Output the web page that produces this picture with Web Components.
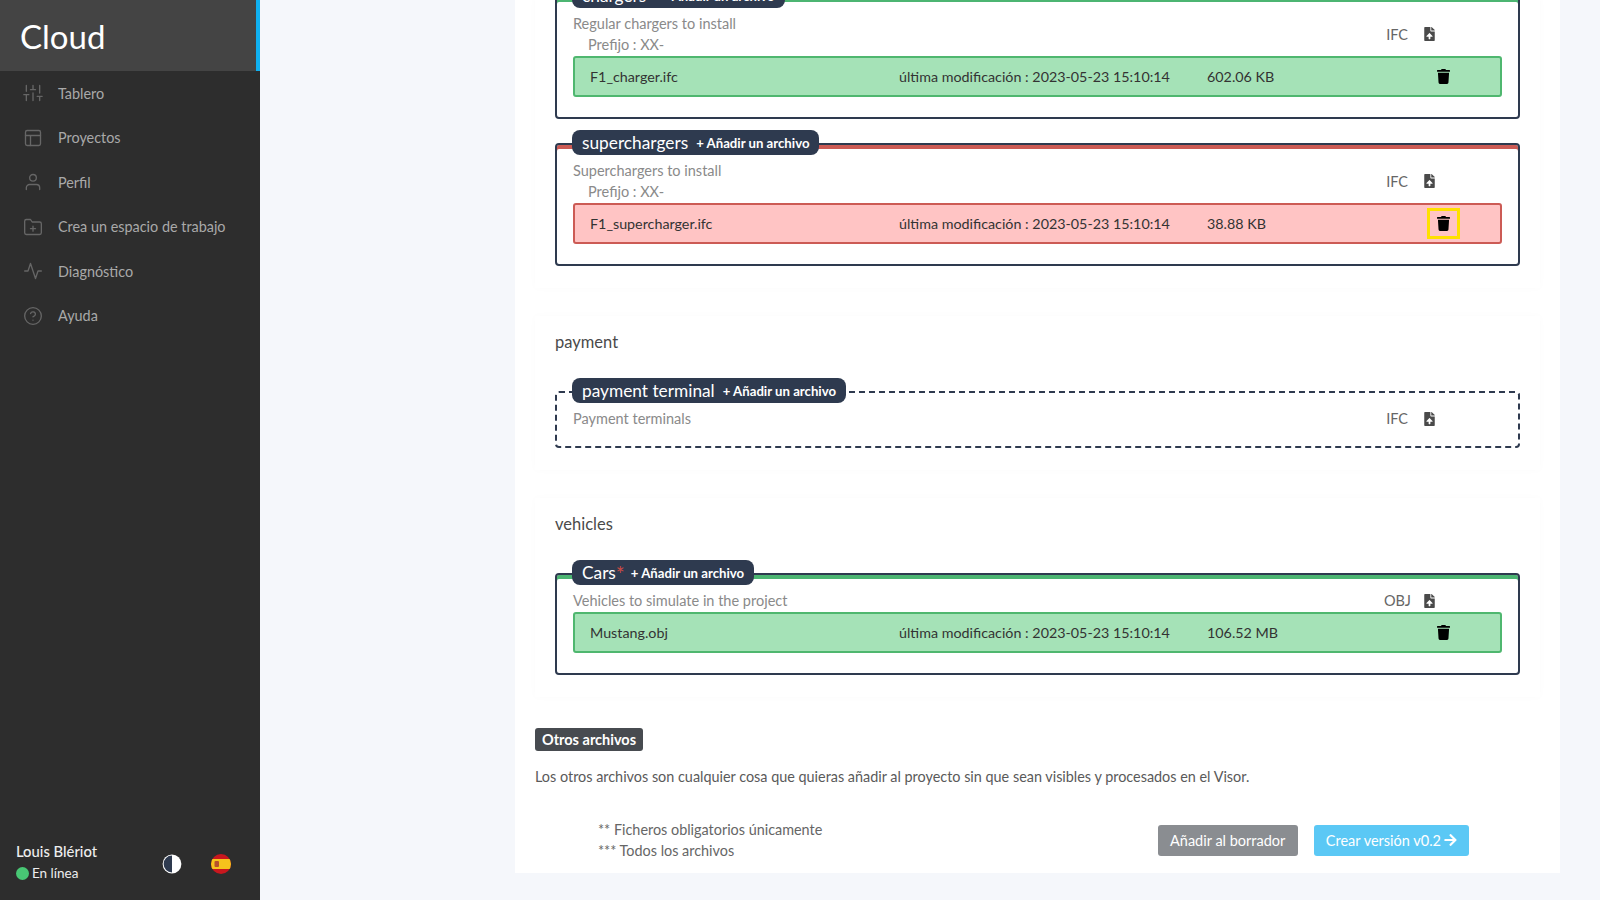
<!DOCTYPE html>
<html lang="es">
<head>
<meta charset="utf-8">
<title>Cloud</title>
<style>
  html, body { margin: 0; height: 100%; }
  body { background: #f5f7fb; font-family: Lato, "Noto Sans", sans-serif; font-size: 15px; overflow: hidden; }
</style>
</head>
<body>
<cloud-app>
  <cloud-sidebar slot="side">
    <nav-item icon="sliders">Tablero</nav-item>
    <nav-item icon="layout">Proyectos</nav-item>
    <nav-item icon="user">Perfil</nav-item>
    <nav-item icon="folder">Crea un espacio de trabajo</nav-item>
    <nav-item icon="activity">Diagnóstico</nav-item>
    <nav-item icon="help">Ayuda</nav-item>
  </cloud-sidebar>

  <version-card>
    <upload-section>
      <upload-box name="chargers" required status="ok" desc="Regular chargers to install" prefix="XX-" format="IFC">
        <file-row name="F1_charger.ifc" date="2023-05-23 15:10:14" size="602.06 KB" status="ok"></file-row>
      </upload-box>
      <upload-box name="superchargers" status="bad" desc="Superchargers to install" prefix="XX-" format="IFC">
        <file-row name="F1_supercharger.ifc" date="2023-05-23 15:10:14" size="38.88 KB" status="bad" focused></file-row>
      </upload-box>
    </upload-section>

    <upload-section heading="payment">
      <upload-box name="payment terminal" status="empty" desc="Payment terminals" format="IFC"></upload-box>
    </upload-section>

    <upload-section heading="vehicles">
      <upload-box name="Cars" required status="ok" desc="Vehicles to simulate in the project" format="OBJ">
        <file-row name="Mustang.obj" date="2023-05-23 15:10:14" size="106.52 MB" status="ok"></file-row>
      </upload-box>
    </upload-section>

    <other-files></other-files>
    <version-actions></version-actions>
  </version-card>
</cloud-app>

<script>
(function () {

  const ICONS = {
    sliders: '<path d="M4 21v-7M4 10V3M12 21v-9M12 8V3M20 21v-5M20 12V3M1 14h6M9 8h6M17 16h6"/>',
    layout: '<rect x="3" y="3" width="18" height="18" rx="2"/><path d="M3 9h18M9 21V9"/>',
    user: '<path d="M20 21v-2a4 4 0 0 0-4-4H8a4 4 0 0 0-4 4v2"/><circle cx="12" cy="7" r="4"/>',
    folder: '<path d="M22 19a2 2 0 0 1-2 2H4a2 2 0 0 1-2-2V5a2 2 0 0 1 2-2h5l2 3h9a2 2 0 0 1 2 2z"/><path d="M12 11v6M9 14h6"/>',
    activity: '<path d="M22 12h-4l-3 9L9 3l-3 9H2"/>',
    help: '<circle cx="12" cy="12" r="10"/><path d="M9.09 9a3 3 0 0 1 5.83 1c0 2-3 3-3 3M12 17h.01"/>'
  };

  const FILE_UPLOAD = '<svg viewBox="0 0 384 512" width="11" height="14" fill="#4a4a4a"><path d="M224 136V0H24C10.7 0 0 10.7 0 24v464c0 13.3 10.7 24 24 24h336c13.3 0 24-10.7 24-24V160H248c-13.2 0-24-10.8-24-24zm65.18 216.01H224v80c0 8.84-7.16 16-16 16h-32c-8.84 0-16-7.16-16-16v-80H94.82c-14.28 0-21.41-17.29-11.27-27.36l96.42-95.7c6.65-6.61 17.39-6.61 24.04 0l96.42 95.7c10.15 10.07 3.03 27.36-11.25 27.36zM377 105L279.1 7c-4.5-4.5-10.6-7-17-7H256v128h128v-6.1c0-6.3-2.5-12.4-7-16.9z"/></svg>';
  const TRASH = '<svg viewBox="0 0 448 512" width="13" height="15" fill="#000"><path d="M432 32H312l-9.4-18.7A24 24 0 0 0 281.1 0H166.8a23.72 23.72 0 0 0-21.4 13.3L136 32H16A16 16 0 0 0 0 48v32a16 16 0 0 0 16 16h416a16 16 0 0 0 16-16V48a16 16 0 0 0-16-16zM53.2 467a48 48 0 0 0 47.9 45h245.8a48 48 0 0 0 47.9-45L416 128H32z"/></svg>';
  const ARROW = '<svg viewBox="0 0 448 512" width="13" height="14" fill="#fff"><path d="M190.5 66.9l22.2-22.2c9.4-9.4 24.6-9.4 33.9 0L441 239c9.4 9.4 9.4 24.6 0 33.9L246.6 467.3c-9.4 9.4-24.6 9.4-33.9 0l-22.2-22.2c-9.5-9.5-9.3-25 .4-34.3L311.4 296H24c-13.3 0-24-10.7-24-24v-32c0-13.3 10.7-24 24-24h287.4L190.9 101.2c-9.8-9.3-10-24.8-.4-34.3z"/></svg>';

  /** Page frame: sidebar on the left, page content pinned to the bottom of the window */
  class CloudApp extends HTMLElement {
    constructor() {
      super();
      this.attachShadow({ mode: 'open' }).innerHTML = `
        <style>
          :host { display: flex; height: 100vh; }
          main { flex: 1; min-width: 0; height: 100%; overflow: hidden; display: flex; flex-direction: column; justify-content: flex-end; padding: 0 40px 27px 255px; box-sizing: border-box; }
        </style>
        <slot name="side"></slot>
        <main><slot></slot></main>`;
    }
  }

  class CloudSidebar extends HTMLElement {
    constructor() {
      super();
      this.attachShadow({ mode: 'open' }).innerHTML = `
        <style>
          :host { display: flex; flex-direction: column; flex: none; width: 260px; height: 100%; background: #2d2d2d; }
          header { height: 71px; flex: none; display: flex; align-items: center; padding: 2px 0 0 20px; box-sizing: border-box; background: #444; border-right: 4px solid #0fb0f0; color: #fff; font-size: 33px; line-height: 1; }
          nav { display: flex; flex-direction: column; }
          footer { margin-top: auto; display: grid; grid-template-columns: 146px 20px 49px; padding: 0 0 16px 16px; align-items: center; }
          .who { display: flex; flex-direction: column; color: #eee; line-height: 22px; }
          .name { font-size: 14.8px; font-weight: 500; }
          .state { display: flex; align-items: center; gap: 3px; font-size: 13.5px; }
          .dot { width: 13px; height: 13px; border-radius: 50%; background: #48c774; }
          .theme { margin-top: 4px; }
          .flag { margin: 4px 0 0 29px; }
          svg { display: block; }
        </style>
        <header>Cloud</header>
        <nav><slot></slot></nav>
        <footer>
          <div class="who"><span class="name">Louis Blériot</span><span class="state"><span class="dot"></span>En línea</span></div>
          <svg class="theme" width="20" height="20" viewBox="0 0 20 20"><circle cx="10" cy="10" r="9.4" fill="#fff"/><path d="M10 1.6a8.4 8.4 0 0 0 0 16.8z" fill="#2e3a4f"/></svg>
          <svg class="flag" width="20" height="20" viewBox="0 0 20 20"><clipPath id="c"><circle cx="10" cy="10" r="10"/></clipPath><g clip-path="url(#c)"><rect width="20" height="20" fill="#c8171e"/><rect y="5" width="20" height="10" fill="#f6c21c"/><rect x="3.5" y="7" width="4.5" height="6" rx="1" fill="#b5502c"/></g></svg>
        </footer>`;
    }
  }

  class NavItem extends HTMLElement {
    constructor() {
      super();
      this.attachShadow({ mode: 'open' }).innerHTML = `
        <style>
          :host { display: flex; align-items: center; height: 44.5px; padding-left: 23px; color: #a9a9a9; font-size: 14.4px; }
          svg { width: 20px; height: 20px; margin-right: 15px; fill: none; stroke: #666; stroke-width: 1.6; stroke-linecap: round; stroke-linejoin: round; flex: none; }
        </style>
        <svg viewBox="0 0 24 24">${ICONS[this.getAttribute('icon')] || ''}</svg><slot></slot>`;
    }
  }

  /** Main white card */
  class VersionCard extends HTMLElement {
    constructor() {
      super();
      this.attachShadow({ mode: 'open' }).innerHTML = `
        <style>
          :host { display: flex; flex-direction: column; flex: none; background: #fff; padding: 0 20px 12px; }
        </style>
        <slot></slot>`;
    }
  }

  /** One family of files, with an optional heading */
  class UploadSection extends HTMLElement {
    constructor() {
      super();
      const heading = this.getAttribute('heading');
      this.attachShadow({ mode: 'open' }).innerHTML = `
        <style>
          :host { display: flex; flex-direction: column; gap: 24px; padding: 0 20px 22px; margin-bottom: 28px; background: #fff; box-shadow: 0 0 8px rgba(0,0,0,.018); }
          h3 { margin: 15px 0 14px; font-size: 16.5px; font-weight: 400; line-height: 22px; color: #4a4a4a; }
        </style>
        ${heading ? `<h3>${heading}</h3>` : ''}
        <slot></slot>`;
    }
  }

  class UploadBox extends HTMLElement {
    constructor() {
      super();
      const prefix = this.getAttribute('prefix');
      this.attachShadow({ mode: 'open' }).innerHTML = `
        <style>
          :host { display: block; border: 2px solid #2e3a4f; border-radius: 4px; padding: 0 16px 16px; }
          :host([status="ok"]) { box-shadow: inset 0 4px 0 #4cb572; }
          :host([status="bad"]) { box-shadow: inset 0 4px 0 #cc5b55; }
          :host([status="empty"]) { border-style: dashed; }
          .pill { display: flex; width: fit-content; align-items: center; height: 25px; margin: -15px 0 0 -1px; padding: 0 10px; background: #2e3a4f; border-radius: 8px; color: #fff; position: relative; }
          .name { font-size: 17.3px; }
          .star { color: #cc4b45; font-size: 21px; line-height: 0; vertical-align: -3px; margin-right: -2px; }
          .add { font-size: 13.2px; font-weight: 700; margin-left: 8px; }
          .head { display: flex; align-items: center; margin-top: 5px; color: #8a8a8a; font-size: 14.5px; line-height: 21px; }
          .prefix { margin-left: 15px; }
          .format { margin-left: auto; width: 24px; text-align: right; color: #666; }
          .up { display: flex; margin: 0 67px 0 16px; }
          slot { display: block; margin-top: 1px; }
          ::slotted(file-row) { margin-bottom: 4px; }
        </style>
        <div class="pill"><span class="name">${this.getAttribute('name')}${this.hasAttribute('required') ? '<span class="star">*</span>' : ''}</span><span class="add">+ Añadir un archivo</span></div>
        <div class="head">
          <div>
            <div>${this.getAttribute('desc')}</div>
            ${prefix ? `<div class="prefix">Prefijo : ${prefix}</div>` : ''}
          </div>
          <span class="format">${this.getAttribute('format')}</span><span class="up">${FILE_UPLOAD}</span>
        </div>
        <slot></slot>`;
    }
  }

  class FileRow extends HTMLElement {
    constructor() {
      super();
      this.attachShadow({ mode: 'open' }).innerHTML = `
        <style>
          :host { display: grid; grid-template-columns: 309px 308px 1fr 33px; align-items: center; height: 41px; box-sizing: border-box; padding: 0 40px 0 15px; border: 2px solid; border-radius: 3px; color: #333; font-size: 14.3px; }
          :host([status="ok"]) { border-color: #4fb76f; background: #a5e2b7; }
          :host([status="bad"]) { border-color: #cc5b55; background: #ffc4c4; }
          .trash { display: flex; align-items: center; justify-content: center; width: 33px; height: 31px; box-sizing: border-box; }
          :host([focused]) .trash { border: 3px solid #ffe000; }
        </style>
        <span>${this.getAttribute('name')}</span>
        <span>última modificación : ${this.getAttribute('date')}</span>
        <span>${this.getAttribute('size')}</span>
        <span class="trash">${TRASH}</span>`;
    }
  }

  class OtherFiles extends HTMLElement {
    constructor() {
      super();
      this.attachShadow({ mode: 'open' }).innerHTML = `
        <style>
          :host { display: block; margin-top: 3px; }
          .tag { display: block; width: fit-content; height: 23px; line-height: 23px; padding: 0 7px; background: #474b50; border-radius: 3px; color: #fff; font-size: 14.5px; font-weight: 700; }
          p { margin: 15px 0 0; line-height: 21px; color: #5a5a5a; font-size: 14.4px; }
        </style>
        <span class="tag">Otros archivos</span>
        <p>Los otros archivos son cualquier cosa que quieras añadir al proyecto sin que sean visibles y procesados en el Visor.</p>`;
    }
  }

  class VersionActions extends HTMLElement {
    constructor() {
      super();
      this.attachShadow({ mode: 'open' }).innerHTML = `
        <style>
          :host { display: flex; align-items: center; margin-top: 32px; padding: 0 71px 0 63px; }
          .notes { line-height: 21px; color: #666; font-size: 14.4px; }
          .btns { margin-left: auto; display: flex; gap: 16px; }
          button { display: flex; align-items: center; gap: 3px; height: 31px; padding: 0 12px; border: 0; border-radius: 3px; color: #fff; font: inherit; font-size: 14.5px; }
          .draft { background: #8a8d91; padding: 0 12.5px; }
          .create { background: #5bc8f5; }
        </style>
        <div class="notes">** Ficheros obligatorios únicamente<br>*** Todos los archivos</div>
        <div class="btns"><button class="draft">Añadir al borrador</button><button class="create">Crear versión v0.2 ${ARROW}</button></div>`;
    }
  }

  window.customElements.define('cloud-app', CloudApp);
  window.customElements.define('cloud-sidebar', CloudSidebar);
  window.customElements.define('nav-item', NavItem);
  window.customElements.define('version-card', VersionCard);
  window.customElements.define('upload-section', UploadSection);
  window.customElements.define('upload-box', UploadBox);
  window.customElements.define('file-row', FileRow);
  window.customElements.define('other-files', OtherFiles);
  window.customElements.define('version-actions', VersionActions);
})();
</script>
</body>
</html>
